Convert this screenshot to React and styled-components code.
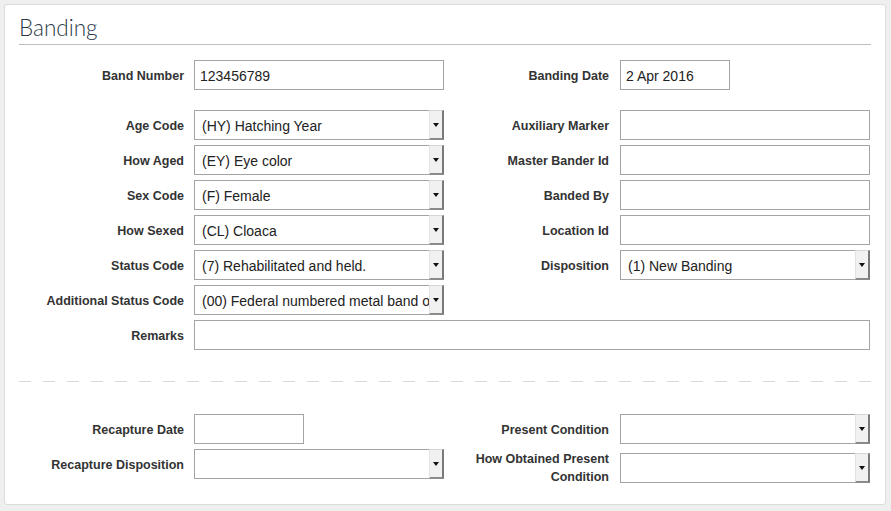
import React from "react";
import styled, { createGlobalStyle } from "styled-components";

const Global = createGlobalStyle`
  html, body { margin: 0; padding: 0; background: #efefef; }
  body { font-family: "Liberation Sans", Arial, sans-serif; }
  * { box-sizing: border-box; }
`;

const Page = styled.div`
  padding: 4px 5px 6px 4px;
  width: 891px;
  height: 511px;
`;

const Card = styled.section`
  background: #fff;
  border: 1px solid #dcdcdc;
  border-radius: 3px;
  height: 501px;
  padding: 0 14px 0 14px;
`;

const Title = styled.h2`
  margin: 0;
  padding: 9px 0 5px 0;
  height: 40px;
  font-family: "Lato", "Liberation Sans", sans-serif;
  font-weight: 300;
  font-size: 22.5px;
  line-height: 28px;
  color: #2b3947;
  border-bottom: 1px solid #bdbdbd;
`;

const Section = styled.div`
  display: grid;
  grid-template-columns: 425px 426px;
  row-gap: 5px;
  align-items: start;
  margin-top: ${(p) => p.$top}px;
`;

const Half = styled.div`
  display: flex;
  align-items: center;
  gap: ${(p) => (p.$right ? 11 : 10)}px;
  grid-column: ${(p) => (p.$span ? "1 / span 2" : "auto")};
  margin-bottom: ${(p) => p.$after || 0}px;
`;

const Label = styled.label`
  flex: 0 0 165px;
  padding-top: 1px;
  text-align: right;
  font-family: "Liberation Sans", Arial, sans-serif;
  font-weight: 700;
  font-size: 12.5px;
  line-height: 18px;
  color: #333;
`;

const Input = styled.div`
  width: ${(p) => p.$w || 250}px;
  height: 30px;
  border: 1px solid #a4a4a4;
  background: #fff;
  padding: 1px 5px 0 5px;
  display: flex;
  align-items: center;
  font-size: 14px;
  color: #222;
  white-space: nowrap;
  overflow: hidden;
  flex: 0 0 auto;
`;

const SelectBox = styled.div`
  width: ${(p) => p.$w || 250}px;
  height: 30px;
  border: 1px solid #a4a4a4;
  border-right: none;
  background: #fff;
  display: flex;
  align-items: stretch;
  font-size: 14px;
  color: #222;
  flex: 0 0 auto;
`;

const SelectText = styled.div`
  flex: 1 1 auto;
  padding: 1px 2px 0 7px;
  display: flex;
  align-items: center;
  white-space: nowrap;
  overflow: hidden;
`;

const SelectButton = styled.div`
  flex: 0 0 15px;
  margin-top: -1px;
  margin-bottom: -1px;
  background: #f1f1f1;
  border-top: 1px solid #d6d6d6;
  border-left: 1px solid #e2e2e2;
  border-right: 2px solid #7a7a7a;
  border-bottom: 2px solid #8a8a8a;
  display: flex;
  align-items: center;
  justify-content: center;
`;

const Arrow = styled.span`
  width: 0;
  height: 0;
  border-left: 3.5px solid transparent;
  border-right: 3.5px solid transparent;
  border-top: 4px solid #111;
  margin-top: 1px;
`;

const Dashed = styled.div`
  height: 1px;
  margin-top: 31px;
  background: repeating-linear-gradient(
    to right,
    #d9d9d9 0,
    #d9d9d9 12px,
    transparent 12px,
    transparent 24px
  );
`;

const Select = ({ value, w }) => (
  <SelectBox $w={w}>
    <SelectText>{value}</SelectText>
    <SelectButton>
      <Arrow />
    </SelectButton>
  </SelectBox>
);

const Field = ({ label, right, children, after, span }) => (
  <Half $right={right} $after={after} $span={span}>
    <Label>{label}</Label>
    {children}
  </Half>
);

export default function App() {
  return (
    <Page>
      <Global />
      <Card>
        <Title>Banding</Title>
        <Section $top={15}>
          <Field label="Band Number" after={15}>
            <Input>123456789</Input>
          </Field>
          <Field label="Banding Date" right after={15}>
            <Input $w={110}>2 Apr 2016</Input>
          </Field>

          <Field label="Age Code">
            <Select value="(HY) Hatching Year" />
          </Field>
          <Field label="Auxiliary Marker" right>
            <Input />
          </Field>

          <Field label="How Aged">
            <Select value="(EY) Eye color" />
          </Field>
          <Field label="Master Bander Id" right>
            <Input />
          </Field>

          <Field label="Sex Code">
            <Select value="(F) Female" />
          </Field>
          <Field label="Banded By" right>
            <Input />
          </Field>

          <Field label="How Sexed">
            <Select value="(CL) Cloaca" />
          </Field>
          <Field label="Location Id" right>
            <Input />
          </Field>

          <Field label="Status Code">
            <Select value="(7) Rehabilitated and held." />
          </Field>
          <Field label="Disposition" right>
            <Select value="(1) New Banding" />
          </Field>

          <Field label="Additional Status Code">
            <Select value="(00) Federal numbered metal band only." />
          </Field>
          <div />

          <Field label="Remarks" span>
            <Input $w={676} />
          </Field>
        </Section>

        <Dashed />

        <Section $top={32}>
          <Field label="Recapture Date">
            <Input $w={110} />
          </Field>
          <Field label="Present Condition" right>
            <Select />
          </Field>

          <Field label="Recapture Disposition">
            <Select />
          </Field>
          <Field label="How Obtained Present Condition" right>
            <Select />
          </Field>
        </Section>
      </Card>
    </Page>
  );
}
